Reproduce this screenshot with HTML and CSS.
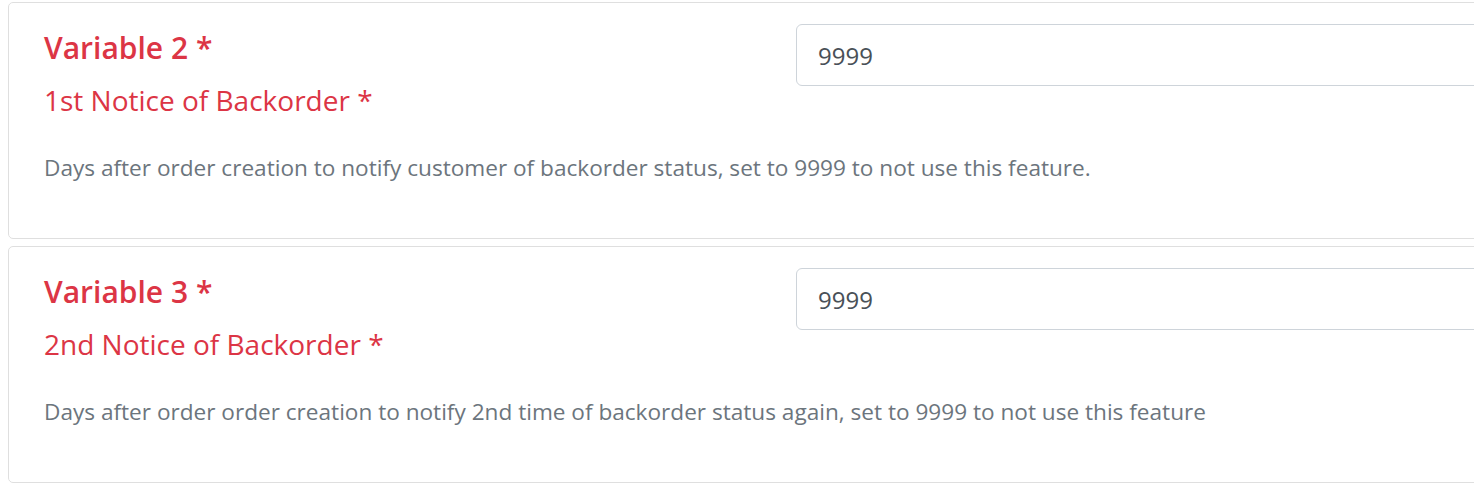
FILE: index.html
```html
<!DOCTYPE html>
<html lang="en">
<head>
    <meta charset="UTF-8">
    <meta name="viewport" content="width=device-width, initial-scale=1.0">
    <title>Settings</title>
    <link rel="stylesheet" href="styles.css">
</head>
<body>
    <div class="settings">
        <div class="card">
            <div class="card-row">
                <div class="card-label">
                    <h5 class="var-name">Variable 2 *</h5>
                    <h6 class="var-title">1st Notice of Backorder *</h6>
                </div>
                <div class="card-field">
                    <input type="text" class="form-control" value="9999">
                </div>
            </div>
            <p class="var-help">Days after order creation to notify customer of backorder status, set to 9999 to not use this feature.</p>
        </div>
        <div class="card">
            <div class="card-row">
                <div class="card-label">
                    <h5 class="var-name">Variable 3 *</h5>
                    <h6 class="var-title">2nd Notice of Backorder *</h6>
                </div>
                <div class="card-field">
                    <input type="text" class="form-control" value="9999">
                </div>
            </div>
            <p class="var-help">Days after order order creation to notify 2nd time of backorder status again, set to 9999 to not use this feature</p>
        </div>
    </div>
</body>
</html>
```

FILE: styles.css
```css
html, body {
    overflow: hidden;
}
body {
    font-family: "Open Sans", "Noto Sans", sans-serif;
    margin: 0;
    padding: 0;
    background-color: #fff;
    height: 483px;
}
.settings {
    display: flex;
    flex-direction: column;
    gap: 7px;
    padding: 2px 0 0 8px;
    width: 1560px;
}
.card {
    border: 1px solid #dfdfdf;
    border-radius: 5px;
    padding: 21px 35px 0 35px;
    height: 237px;
    box-sizing: border-box;
}
.card-row {
    display: flex;
}
.card-label {
    width: 752px;
}
.card-field {
    flex: 1;
}
.var-name {
    color: #dc3545;
    font-size: 30px;
    font-weight: 600;
    margin: 0;
    line-height: 48px;
}
.var-title {
    color: #dc3545;
    font-size: 28px;
    font-weight: 400;
    margin: 0;
    line-height: 56px;
}
.form-control {
    width: 100%;
    height: 62px;
    box-sizing: border-box;
    padding: 0 21px;
    font-family: inherit;
    font-size: 24px;
    color: #495057;
    border: 1px solid #ced4da;
    border-radius: 6px;
}
.var-help {
    color: #6c757d;
    font-size: 22.6px;
    margin: 24px 0 0 0;
}
```
